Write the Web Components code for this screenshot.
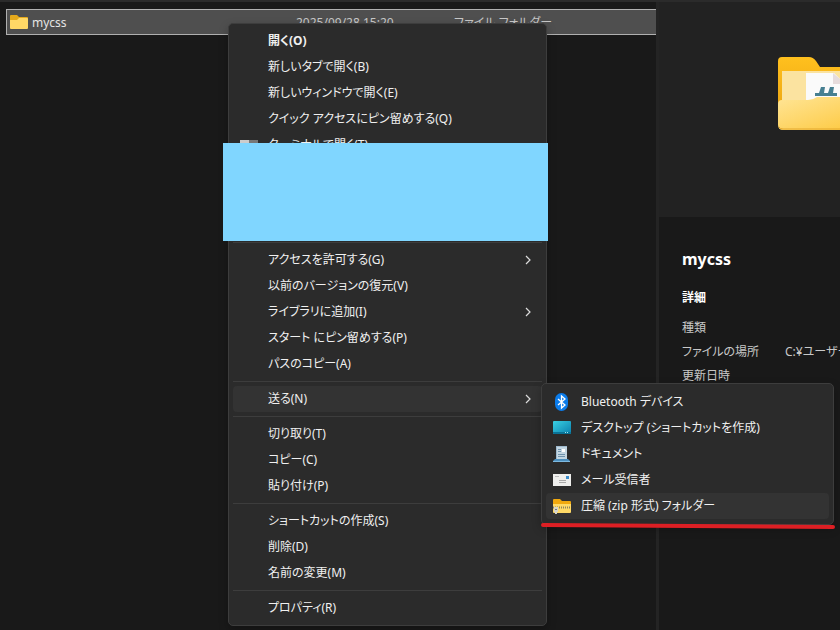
<!DOCTYPE html>
<html lang="ja">
<head>
<meta charset="utf-8">
<title>mycss</title>
<style>
  :root {
    --window-bg: #191919;
    --preview-bg: #222222;
    --line: #2b2b2b;
    --menu-bg: #2b2b2b;
    --menu-border: #3d3d3d;
    --menu-hover: #333333;
    --menu-text: #f0f0f0;
  }
  body {
    margin: 0;
    min-height: 100vh;
    overflow: hidden;
    background: var(--window-bg);
    color: #c8c8c8;
    font: 12px/18px "Noto Sans", "Noto Sans CJK JP", sans-serif;
    font-feature-settings: "palt";
  }
</style>
</head>
<body>
<explorer-window>
  <file-list slot="files" name="mycss" date="2025/09/28 15:20" type="ファイル フォルダー"></file-list>
  <detail-pane slot="details" name="mycss" location="C:¥ユーザー"></detail-pane>

  <context-menu slot="menu" class="main">
    <menu-item bold>開く(O)</menu-item>
    <menu-item>新しいタブで開く(B)</menu-item>
    <menu-item>新しいウィンドウで開く(E)</menu-item>
    <menu-item>クイック アクセスにピン留めする(Q)</menu-item>
    <menu-item>
      <svg slot="icon" viewBox="0 0 18 18" width="18" height="18"><rect y="4" width="18" height="13" rx="1" fill="#555"/><path d="M0 4h9v3H0z" fill="#ccc"/><path d="M9 4h9v3H9z" fill="#777"/></svg>
      ターミナルで開く(T)
    </menu-item>
    <menu-cover></menu-cover>
    <menu-line></menu-line>
    <menu-item more>アクセスを許可する(G)</menu-item>
    <menu-item>以前のバージョンの復元(V)</menu-item>
    <menu-item more>ライブラリに追加(I)</menu-item>
    <menu-item>スタート にピン留めする(P)</menu-item>
    <menu-item>パスのコピー(A)</menu-item>
    <menu-line></menu-line>
    <menu-item more active>送る(N)</menu-item>
    <menu-line></menu-line>
    <menu-item>切り取り(T)</menu-item>
    <menu-item>コピー(C)</menu-item>
    <menu-item>貼り付け(P)</menu-item>
    <menu-line></menu-line>
    <menu-item>ショートカットの作成(S)</menu-item>
    <menu-item>削除(D)</menu-item>
    <menu-item>名前の変更(M)</menu-item>
    <menu-line></menu-line>
    <menu-item>プロパティ(R)</menu-item>
  </context-menu>

  <context-menu slot="menu" class="send" marked>
    <menu-item>
      <svg slot="icon" viewBox="0 0 18 18" width="18" height="18"><rect x="2" width="13" height="18" rx="6.5" fill="#0a7bea"/><path d="M5 6l7 6-3.5 3V3L12 6l-7 6" fill="none" stroke="#fff" stroke-width="1.3"/></svg>
      Bluetooth デバイス
    </menu-item>
    <menu-item>
      <svg slot="icon" viewBox="0 0 18 18" width="18" height="18"><defs><linearGradient id="desk" x2="1" y2="1"><stop stop-color="#3ad0e2"/><stop offset="1" stop-color="#0a7fae"/></linearGradient></defs><rect y="2" width="18" height="13" rx="1" fill="url(#desk)"/><path d="M0 13h18v1q0 1-1 1H1q-1 0-1-1z" fill="#0a7396"/><path d="M12 13h1v1h-1zM14 13h1v1h-1z" fill="#9fe6f2"/></svg>
      デスクトップ (ショートカットを作成)
    </menu-item>
    <menu-item>
      <svg slot="icon" viewBox="0 0 18 18" width="18" height="18"><path d="M3 1h11v14H3z" fill="#9db9cd"/><path d="M4 2h10v12H4z" fill="#c3d6e2"/><path d="M5 4.5h3M5 6.5h3M5 9.5h7M5 11.5h7" stroke="#6f93ad"/><path d="M9 4h3v3H9z" fill="#fff"/><path d="M2 14h13l2 2H0z" fill="#4b8fbe"/><path d="M0 16h17v1H0z" fill="#7db9e0"/></svg>
      ドキュメント
    </menu-item>
    <menu-item>
      <svg slot="icon" viewBox="0 0 18 18" width="18" height="18"><path d="M0 3h18v12H0z" fill="#eeeeec"/><path d="M2 5.5h4" stroke="#bbb"/><path d="M6 9.5h7M6 11.5h7" stroke="#aaa"/><path d="M13 5h3v3h-3z" fill="#3c8dcc"/></svg>
      メール受信者
    </menu-item>
    <menu-item active>
      <svg slot="icon" viewBox="0 0 18 18" width="18" height="18"><path d="M0 3q0-1 1-1h6l2 2h8q1 0 1 1v10H0z" fill="#f0a80e"/><path d="M0 7h18v8q0 1-1 1H1q-1 0-1-1z" fill="#ffd966"/><path d="M0 10.5h18" stroke="#8d845f" stroke-width="2" stroke-dasharray="1 1"/><path d="M1 10h4v5H4v2H2v-2H1z" fill="#d5d5cd"/><path d="M2 12h2v1H2z" fill="#777"/></svg>
      圧縮 (zip 形式) フォルダー
    </menu-item>
  </context-menu>
</explorer-window>

<script>
class BaseElement extends HTMLElement {
  constructor() {
    super();
    this.attachShadow({ mode: "open" });
  }

  connectedCallback() {
    const template = document.createElement("template");
    template.innerHTML = this.getTemplate();
    this.shadowRoot.replaceChildren(template.content.cloneNode(true));
  }
}

class ExplorerWindow extends BaseElement {
  getTemplate() {
    return `
      <style>
        :host {
          display: grid;
          position: relative;
          grid-template-columns: minmax(0, 1fr) 184px;
          min-height: 100vh;
          box-sizing: border-box;
          border-top: 2px solid var(--line);
        }
        /* The menus float over the window */
        ::slotted(context-menu) { position: absolute; }
        ::slotted(.main) { left: 228px; top: 21px; width: 319px; }
        ::slotted(.send) { left: 541px; top: 381px; width: 293px; }
      </style>
      <slot name="files"></slot>
      <slot name="details"></slot>
      <slot name="menu"></slot>
    `;
  }
}

class FileList extends BaseElement {
  getTemplate() {
    return `
      <style>
        :host { display: block; padding: 7px 0 0 6px; }
        table {
          width: 100%;
          table-layout: fixed;
          border-collapse: separate;
          border-spacing: 0;
          background: #4f4f4f;
          border: 1px solid #b0b0b0;
          border-right: 0;
        }
        td { height: 22px; padding: 2px 0 0; white-space: nowrap; }
        .name { width: 289px; color: #e4e4e4; }
        .date { width: 158px; }
        .name div { display: flex; align-items: center; gap: 4px; padding: 0 3px; }
        svg { margin-bottom: 2px; }
      </style>
      <table>
        <tr>
          <td class="name"><div>
            <svg viewBox="0 0 18 16" width="18" height="16"><path d="M0 2q0-1 1-1h6l2 2h8q1 0 1 1v6H0z" fill="#e5a91c"/><path d="M0 6h7l2-2h8q1 0 1 1v9q0 1-1 1H1q-1 0-1-1z" fill="#ffd866"/></svg>
            <span>${this.getAttribute("name")}</span>
          </div></td>
          <td class="date">${this.getAttribute("date")}</td>
          <td>${this.getAttribute("type")}</td>
        </tr>
      </table>
    `;
  }
}

class DetailPane extends BaseElement {
  getTemplate() {
    return `
      <style>
        :host {
          display: block;
          overflow: hidden;
          border-left: 3px solid #242424;
        }
        .preview {
          height: 160px;
          padding: 55px 0 0 119px;
          background: var(--preview-bg);
        }
        .preview svg { display: block; }
        .info { padding: 31px 0 0 23px; }
        h1 { margin: 0 0 19px; font-size: 16px; line-height: 22px; color: #fff; }
        h2 { margin: 0 0 9px; font-size: 12px; line-height: 18px; color: #fff; }
        table { width: 100%; border-collapse: collapse; table-layout: fixed; }
        th, td {
          height: 24px;
          padding: 0;
          font-weight: normal;
          text-align: left;
          white-space: nowrap;
        }
        th { width: 103px; }
      </style>
      <div class="preview">
        <svg viewBox="0 0 92 74" width="92" height="74">
          <defs>
            <linearGradient id="back" x2="0" y2="1"><stop stop-color="#ffc01e"/><stop offset="1" stop-color="#e8a010"/></linearGradient>
            <linearGradient id="front" x2="1" y2="1"><stop stop-color="#ffe596"/><stop offset="1" stop-color="#fdc638"/></linearGradient>
          </defs>
          <path d="M0 4q0-4 4-4h27q4 0 7 4l4 6h46q4 0 4 4v52H0z" fill="url(#back)"/>
          <path d="M4 14h86v40H4z" fill="#fbe3a0"/>
          <path d="M28 16h28l12 12v24H28z" fill="#fafafa"/>
          <path d="M55 16v11h13z" fill="#e6dcdc"/>
          <path d="M37 36h4l2-6h4l-1 6h4l2-6h4l-1 6h4v3H37z" fill="#467f91"/>
          <path d="M0 47q0-4 4-4h26q5 0 9-3h49q4 0 4 4v24q0 5-5 5H5q-5 0-5-5z" fill="url(#front)"/>
          <path d="M1 70q1 2 4 2h82q3 0 4-2" fill="none" stroke="#e3a72c" stroke-width="1"/>
        </svg>
      </div>
      <div class="info">
        <h1>${this.getAttribute("name")}</h1>
        <h2>詳細</h2>
        <table>
          <tr><th>種類</th><td></td></tr>
          <tr><th>ファイルの場所</th><td>${this.getAttribute("location")}</td></tr>
          <tr><th>更新日時</th><td></td></tr>
        </table>
      </div>
    `;
  }
}

class ContextMenu extends BaseElement {
  getTemplate() {
    const underline = `
      <svg class="mark" viewBox="0 0 294 6" preserveAspectRatio="none">
        <path d="M2 2L292 4" stroke="#dd1f24" stroke-width="4" stroke-linecap="round"/>
      </svg>`;
    return `
      <style>
        :host {
          display: block;
          box-sizing: border-box;
          padding: 4px;
          background: var(--menu-bg);
          border: 1px solid var(--menu-border);
          border-radius: 5px;
          box-shadow: 0 4px 10px rgba(0, 0, 0, .25);
        }
        :host([marked]) { padding: 5px 4px; }
        .mark {
          position: absolute;
          left: -1px;
          bottom: -5px;
          width: calc(100% + 3px);
          height: 6px;
          overflow: visible;
        }
      </style>
      <slot></slot>
      ${this.hasAttribute("marked") ? underline : ""}
    `;
  }
}

class MenuItem extends BaseElement {
  getTemplate() {
    const chevron = `<svg class="more" viewBox="0 0 6 10" width="6" height="10"><path d="M1 1l4 4-4 4" fill="none" stroke="#dcdcdc" stroke-width="1.2"/></svg>`;
    return `
      <style>
        :host { display: block; }
        button {
          display: flex;
          align-items: center;
          gap: 10px;
          width: 100%;
          height: 26px;
          padding: 0 11px 0 7px;
          border: 0;
          border-radius: 4px;
          background: none;
          color: var(--menu-text);
          font: inherit;
          font-feature-settings: inherit;
          text-align: left;
          white-space: nowrap;
        }
        button:hover, :host([active]) button { background: var(--menu-hover); }
        :host([bold]) button { font-weight: bold; }
        .icon { flex: none; width: 18px; height: 18px; }
        .text { flex: 1; }
      </style>
      <button type="button">
        <span class="icon"><slot name="icon"></slot></span>
        <span class="text"><slot></slot></span>
        ${this.hasAttribute("more") ? chevron : ""}
      </button>
    `;
  }
}

class MenuLine extends BaseElement {
  getTemplate() {
    return `
      <style>
        :host { display: block; height: 1px; margin: 4px 0; background: var(--menu-border); }
      </style>
    `;
  }
}

/* Plain block that hides the middle entries */
class MenuCover extends BaseElement {
  getTemplate() {
    return `
      <style>
        :host { display: block; position: relative; height: 80px; }
        div { position: absolute; inset: -15px -6px -3px -10px; background: #80d6ff; }
      </style>
      <div></div>
    `;
  }
}

customElements.define("explorer-window", ExplorerWindow);
customElements.define("file-list", FileList);
customElements.define("detail-pane", DetailPane);
customElements.define("context-menu", ContextMenu);
customElements.define("menu-item", MenuItem);
customElements.define("menu-line", MenuLine);
customElements.define("menu-cover", MenuCover);
</script>
</body>
</html>
